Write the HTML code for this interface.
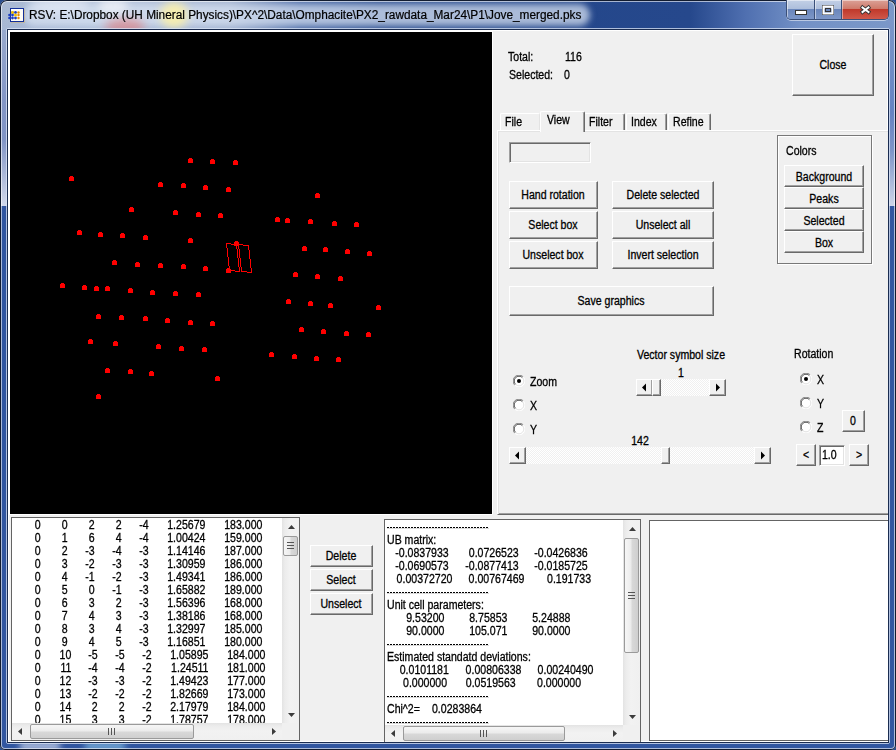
<!DOCTYPE html><html><head><meta charset="utf-8"><style>
html,body{margin:0;padding:0;}
body{width:896px;height:750px;overflow:hidden;position:relative;background:#2b4f8f;font-family:'Liberation Sans',sans-serif;}
.t{position:absolute;white-space:pre;font-family:'Liberation Sans',sans-serif;font-size:12px;line-height:13px;-webkit-text-stroke:0.3px currentColor;}
.z{position:absolute;width:0;height:13px;}
.btn{position:absolute;box-sizing:border-box;background:#f0f0f0;border-style:solid;border-width:1px;border-color:#fff #696969 #696969 #fff;box-shadow:inset -1px -1px 0 #a0a0a0;}
.sunk{position:absolute;box-sizing:border-box;border-style:solid;border-width:1px;border-color:#a0a0a0 #fff #fff #a0a0a0;box-shadow:inset 1px 1px 0 #696969, inset -1px -1px 0 #e3e3e3;}
</style></head><body>
<div style="position:absolute;left:0;top:0;width:896px;height:750px;border-radius:7px 7px 5px 5px;overflow:hidden;background:#3156a0"><div style="position:absolute;left:0;top:0;width:896px;height:30px;background:linear-gradient(90deg,#a9b9d3 0px,#b4c2da 120px,#a3b3cf 230px,#4a6aa6 300px,#2d4f90 380px,#24478b 560px,#26488c 690px,#4f6fb0 745px,#7391c6 800px,#7b98c8 896px)"></div><div style="position:absolute;left:0;top:18px;width:300px;height:12px;background:linear-gradient(180deg,rgba(160,180,215,0),rgba(160,180,215,.35));-webkit-mask-image:linear-gradient(90deg,#000 70%,transparent)"></div><div style="position:absolute;left:24px;top:4px;width:566px;height:22px;border-radius:11px;background:rgba(215,225,242,.75);filter:blur(3px)"></div><div style="position:absolute;left:105px;top:18px;width:40px;height:18px;border-radius:50%;background:rgba(225,110,110,.55);filter:blur(5px)"></div><div style="position:absolute;left:160px;top:2px;width:28px;height:26px;border-radius:50%;background:rgba(250,240,170,.9);filter:blur(4px)"></div><div style="position:absolute;left:98px;top:-2px;width:30px;height:16px;border-radius:50%;background:rgba(245,245,250,.7);filter:blur(4px)"></div><div style="position:absolute;left:30px;top:-4px;width:60px;height:16px;border-radius:50%;background:rgba(235,240,250,.6);filter:blur(5px)"></div><div style="position:absolute;left:0;top:30px;width:8px;height:176px;background:linear-gradient(180deg,#98a9cd 0,#8396c6 40%,#8094c5 62%,#d2d9eb 100%)"></div><div style="position:absolute;left:888px;top:20px;width:8px;height:186px;background:linear-gradient(180deg,#7d97c9 0,#6683c2 50%,#7d95c8 70%,#cdd5e8 100%)"></div><div style="position:absolute;left:20px;top:743px;width:40px;height:6px;background:rgba(235,240,250,.85);filter:blur(3px)"></div><div style="position:absolute;left:85px;top:743px;width:40px;height:6px;background:rgba(150,210,240,.8);filter:blur(3px)"></div></div>
<div style="position:absolute;left:0;top:0;width:896px;height:750px;border-radius:7px 7px 5px 5px;box-shadow:inset 0 0 0 1px #121c30, inset 0 0 0 2px rgba(255,255,255,.6);"></div>
<div style="position:absolute;left:6px;top:28px;width:884px;height:716px;box-sizing:border-box;border:1px solid rgba(220,230,245,.75);border-radius:2px"></div>
<div style="position:absolute;left:8px;top:30px;width:880px;height:712px;background:#f0f0f0"></div>
<div style="position:absolute;left:7px;top:29px;width:882px;height:1px;background:#1a2c50"></div>
<div style="position:absolute;left:7px;top:29px;width:1px;height:713px;background:#1a2c50"></div>
<div style="position:absolute;left:888px;top:29px;width:1px;height:713px;background:#1a2c50"></div>
<div style="position:absolute;left:8px;top:30px;width:880px;height:1px;background:#fff"></div>
<div style="position:absolute;left:8px;top:30px;width:1px;height:712px;background:#fff"></div>
<div style="position:absolute;left:887px;top:30px;width:1px;height:712px;background:#fff"></div>
<div style="position:absolute;left:7px;top:742px;width:882px;height:1px;background:#1a2c50"></div>
<div style="position:absolute;left:8px;top:741px;width:880px;height:1px;background:#fff"></div>
<div style="position:absolute;left:9px;top:31px;width:484px;height:484px;background:#fff"></div>
<div style="position:absolute;left:10px;top:32px;width:482px;height:482px;background:#000"></div>
<svg style="position:absolute;left:0;top:0" width="896" height="750" shape-rendering="crispEdges"><path d="M188 159h5v4h-5zM189 158h3v1h-3z" fill="#f00"/><path d="M210 160h5v4h-5zM211 159h3v1h-3z" fill="#f00"/><path d="M233 161h5v4h-5zM234 160h3v1h-3z" fill="#f00"/><path d="M69 177h5v4h-5zM70 176h3v1h-3z" fill="#f00"/><path d="M158 183h5v4h-5zM159 182h3v1h-3z" fill="#f00"/><path d="M181 184h5v4h-5zM182 183h3v1h-3z" fill="#f00"/><path d="M203 186h5v4h-5zM204 185h3v1h-3z" fill="#f00"/><path d="M226 188h5v4h-5zM227 187h3v1h-3z" fill="#f00"/><path d="M129 208h5v4h-5zM130 207h3v1h-3z" fill="#f00"/><path d="M173 211h5v4h-5zM174 210h3v1h-3z" fill="#f00"/><path d="M196 213h5v4h-5zM197 212h3v1h-3z" fill="#f00"/><path d="M218 214h5v4h-5zM219 213h3v1h-3z" fill="#f00"/><path d="M77 231h5v4h-5zM78 230h3v1h-3z" fill="#f00"/><path d="M98 233h5v4h-5zM99 232h3v1h-3z" fill="#f00"/><path d="M120 234h5v4h-5zM121 233h3v1h-3z" fill="#f00"/><path d="M143 236h5v4h-5zM144 235h3v1h-3z" fill="#f00"/><path d="M188 239h5v4h-5zM189 238h3v1h-3z" fill="#f00"/><path d="M112 261h5v4h-5zM113 260h3v1h-3z" fill="#f00"/><path d="M135 263h5v4h-5zM136 262h3v1h-3z" fill="#f00"/><path d="M158 264h5v4h-5zM159 263h3v1h-3z" fill="#f00"/><path d="M181 265h5v4h-5zM182 264h3v1h-3z" fill="#f00"/><path d="M203 267h5v4h-5zM204 266h3v1h-3z" fill="#f00"/><path d="M60 284h5v4h-5zM61 283h3v1h-3z" fill="#f00"/><path d="M82 286h5v4h-5zM83 285h3v1h-3z" fill="#f00"/><path d="M94 287h5v4h-5zM95 286h3v1h-3z" fill="#f00"/><path d="M105 287h5v4h-5zM106 286h3v1h-3z" fill="#f00"/><path d="M128 289h5v4h-5zM129 288h3v1h-3z" fill="#f00"/><path d="M150 291h5v4h-5zM151 290h3v1h-3z" fill="#f00"/><path d="M173 292h5v4h-5zM174 291h3v1h-3z" fill="#f00"/><path d="M196 293h5v4h-5zM197 292h3v1h-3z" fill="#f00"/><path d="M96 315h5v4h-5zM97 314h3v1h-3z" fill="#f00"/><path d="M119 316h5v4h-5zM120 315h3v1h-3z" fill="#f00"/><path d="M143 317h5v4h-5zM144 316h3v1h-3z" fill="#f00"/><path d="M165 319h5v4h-5zM166 318h3v1h-3z" fill="#f00"/><path d="M188 321h5v4h-5zM189 320h3v1h-3z" fill="#f00"/><path d="M210 322h5v4h-5zM211 321h3v1h-3z" fill="#f00"/><path d="M88 340h5v4h-5zM89 339h3v1h-3z" fill="#f00"/><path d="M113 342h5v4h-5zM114 341h3v1h-3z" fill="#f00"/><path d="M156 345h5v4h-5zM157 344h3v1h-3z" fill="#f00"/><path d="M179 347h5v4h-5zM180 346h3v1h-3z" fill="#f00"/><path d="M202 348h5v4h-5zM203 347h3v1h-3z" fill="#f00"/><path d="M105 369h5v4h-5zM106 368h3v1h-3z" fill="#f00"/><path d="M128 370h5v4h-5zM129 369h3v1h-3z" fill="#f00"/><path d="M149 372h5v4h-5zM150 371h3v1h-3z" fill="#f00"/><path d="M215 377h5v4h-5zM216 376h3v1h-3z" fill="#f00"/><path d="M96 395h5v4h-5zM97 394h3v1h-3z" fill="#f00"/><path d="M315 194h5v4h-5zM316 193h3v1h-3z" fill="#f00"/><path d="M275 218h5v4h-5zM276 217h3v1h-3z" fill="#f00"/><path d="M285 219h5v4h-5zM286 218h3v1h-3z" fill="#f00"/><path d="M308 220h5v4h-5zM309 219h3v1h-3z" fill="#f00"/><path d="M332 222h5v4h-5zM333 221h3v1h-3z" fill="#f00"/><path d="M354 223h5v4h-5zM355 222h3v1h-3z" fill="#f00"/><path d="M302 247h5v4h-5zM303 246h3v1h-3z" fill="#f00"/><path d="M323 248h5v4h-5zM324 247h3v1h-3z" fill="#f00"/><path d="M345 250h5v4h-5zM346 249h3v1h-3z" fill="#f00"/><path d="M367 252h5v4h-5zM368 251h3v1h-3z" fill="#f00"/><path d="M293 273h5v4h-5zM294 272h3v1h-3z" fill="#f00"/><path d="M315 275h5v4h-5zM316 274h3v1h-3z" fill="#f00"/><path d="M338 277h5v4h-5zM339 276h3v1h-3z" fill="#f00"/><path d="M286 300h5v4h-5zM287 299h3v1h-3z" fill="#f00"/><path d="M308 302h5v4h-5zM309 301h3v1h-3z" fill="#f00"/><path d="M328 304h5v4h-5zM329 303h3v1h-3z" fill="#f00"/><path d="M376 306h5v4h-5zM377 305h3v1h-3z" fill="#f00"/><path d="M299 328h5v4h-5zM300 327h3v1h-3z" fill="#f00"/><path d="M321 330h5v4h-5zM322 329h3v1h-3z" fill="#f00"/><path d="M344 332h5v4h-5zM345 331h3v1h-3z" fill="#f00"/><path d="M366 333h5v4h-5zM367 332h3v1h-3z" fill="#f00"/><path d="M269 353h5v4h-5zM270 352h3v1h-3z" fill="#f00"/><path d="M292 355h5v4h-5zM293 354h3v1h-3z" fill="#f00"/><path d="M314 357h5v4h-5zM315 356h3v1h-3z" fill="#f00"/><path d="M336 358h5v4h-5zM337 357h3v1h-3z" fill="#f00"/><path d="M234 242h5v4h-5zM235 241h3v1h-3z" fill="#f00"/><path d="M226 269h5v4h-5zM227 268h3v1h-3z" fill="#f00"/><path d="M226 243h1v1h-1zM226 244h1v1h-1zM226 245h1v1h-1zM226 246h1v1h-1zM226 247h1v1h-1zM227 243h1v1h-1zM227 248h1v1h-1zM227 249h1v1h-1zM227 250h1v1h-1zM227 251h1v1h-1zM227 252h1v1h-1zM227 253h1v1h-1zM227 254h1v1h-1zM227 255h1v1h-1zM227 256h1v1h-1zM228 243h1v1h-1zM228 257h1v1h-1zM228 258h1v1h-1zM228 259h1v1h-1zM228 260h1v1h-1zM228 261h1v1h-1zM228 262h1v1h-1zM228 263h1v1h-1zM228 264h1v1h-1zM228 265h1v1h-1zM229 243h1v1h-1zM229 266h1v1h-1zM229 267h1v1h-1zM229 268h1v1h-1zM229 269h1v1h-1zM229 270h1v1h-1zM230 243h1v1h-1zM230 270h1v1h-1zM231 244h1v1h-1zM231 270h1v1h-1zM232 244h1v1h-1zM232 270h1v1h-1zM233 244h1v1h-1zM233 270h1v1h-1zM234 244h1v1h-1zM234 270h1v1h-1zM235 244h1v1h-1zM235 271h1v1h-1zM236 244h1v1h-1zM236 245h1v1h-1zM236 246h1v1h-1zM236 247h1v1h-1zM236 248h1v1h-1zM236 271h1v1h-1zM237 249h1v1h-1zM237 250h1v1h-1zM237 251h1v1h-1zM237 252h1v1h-1zM237 253h1v1h-1zM237 254h1v1h-1zM237 255h1v1h-1zM237 256h1v1h-1zM237 257h1v1h-1zM237 271h1v1h-1zM238 244h1v1h-1zM238 245h1v1h-1zM238 246h1v1h-1zM238 247h1v1h-1zM238 248h1v1h-1zM238 258h1v1h-1zM238 259h1v1h-1zM238 260h1v1h-1zM238 261h1v1h-1zM238 262h1v1h-1zM238 263h1v1h-1zM238 264h1v1h-1zM238 265h1v1h-1zM238 266h1v1h-1zM238 271h1v1h-1zM239 244h1v1h-1zM239 249h1v1h-1zM239 250h1v1h-1zM239 251h1v1h-1zM239 252h1v1h-1zM239 253h1v1h-1zM239 254h1v1h-1zM239 255h1v1h-1zM239 256h1v1h-1zM239 257h1v1h-1zM239 267h1v1h-1zM239 268h1v1h-1zM239 269h1v1h-1zM239 270h1v1h-1zM239 271h1v1h-1zM240 244h1v1h-1zM240 258h1v1h-1zM240 259h1v1h-1zM240 260h1v1h-1zM240 261h1v1h-1zM240 262h1v1h-1zM240 263h1v1h-1zM240 264h1v1h-1zM240 265h1v1h-1zM240 266h1v1h-1zM241 244h1v1h-1zM241 267h1v1h-1zM241 268h1v1h-1zM241 269h1v1h-1zM241 270h1v1h-1zM241 271h1v1h-1zM242 244h1v1h-1zM242 271h1v1h-1zM243 245h1v1h-1zM243 271h1v1h-1zM244 245h1v1h-1zM244 271h1v1h-1zM245 245h1v1h-1zM245 271h1v1h-1zM246 245h1v1h-1zM246 271h1v1h-1zM247 245h1v1h-1zM247 272h1v1h-1zM248 245h1v1h-1zM248 246h1v1h-1zM248 247h1v1h-1zM248 248h1v1h-1zM248 249h1v1h-1zM248 272h1v1h-1zM249 250h1v1h-1zM249 251h1v1h-1zM249 252h1v1h-1zM249 253h1v1h-1zM249 254h1v1h-1zM249 255h1v1h-1zM249 256h1v1h-1zM249 257h1v1h-1zM249 258h1v1h-1zM249 272h1v1h-1zM250 259h1v1h-1zM250 260h1v1h-1zM250 261h1v1h-1zM250 262h1v1h-1zM250 263h1v1h-1zM250 264h1v1h-1zM250 265h1v1h-1zM250 266h1v1h-1zM250 267h1v1h-1zM250 272h1v1h-1zM251 268h1v1h-1zM251 269h1v1h-1zM251 270h1v1h-1zM251 271h1v1h-1zM251 272h1v1h-1z" fill="#f00"/></svg>
<div class="t" style="left:508px;top:51px;transform:scaleX(0.88);transform-origin:0 0;font-size:12px;color:#000;">Total:</div>
<div class="t" style="left:565px;top:51px;transform:scaleX(0.88);transform-origin:0 0;font-size:12px;color:#000;">116</div>
<div class="t" style="left:509px;top:69px;transform:scaleX(0.88);transform-origin:0 0;font-size:12px;color:#000;">Selected:</div>
<div class="t" style="left:564px;top:69px;transform:scaleX(0.88);transform-origin:0 0;font-size:12px;color:#000;">0</div>
<div class="btn" style="left:792px;top:34px;width:82px;height:62px"></div>
<div class="z" style="left:832.7px;top:59px"><span class="t" style="left:0;transform:translateX(-50%) scaleX(0.88);transform-origin:50% 0;font-size:12px;color:#000;">Close</span></div>
<div style="position:absolute;left:497px;top:130px;width:391px;height:385px;background:#f0f0f0;border-top:1px solid #fff;border-left:1px solid #fff;border-bottom:1px solid #696969;box-sizing:border-box;box-shadow:inset 1px 1px 0 #e3e3e3, inset 0 -1px 0 #a0a0a0"></div>
<div style="position:absolute;left:500px;top:113px;width:40px;height:17px;background:#f0f0f0;box-sizing:border-box;border-left:1px solid #fff;border-top:1px solid #fff;border-right:1px solid #e3e3e3;border-radius:2px 2px 0 0"></div>
<div style="position:absolute;left:584px;top:113px;width:41px;height:17px;background:#f0f0f0;box-sizing:border-box;border-left:1px solid #fff;border-top:1px solid #fff;border-right:1px solid #696969;border-radius:2px 2px 0 0;box-shadow:inset -1px 0 0 #a0a0a0"></div>
<div style="position:absolute;left:626px;top:113px;width:41px;height:17px;background:#f0f0f0;box-sizing:border-box;border-left:1px solid #fff;border-top:1px solid #fff;border-right:1px solid #696969;border-radius:2px 2px 0 0;box-shadow:inset -1px 0 0 #a0a0a0"></div>
<div style="position:absolute;left:668px;top:113px;width:43px;height:17px;background:#f0f0f0;box-sizing:border-box;border-left:1px solid #fff;border-top:1px solid #fff;border-right:1px solid #696969;border-radius:2px 2px 0 0;box-shadow:inset -1px 0 0 #a0a0a0"></div>
<div style="position:absolute;left:540px;top:111px;width:45px;height:21px;background:#f0f0f0;box-sizing:border-box;border-left:1px solid #fff;border-top:1px solid #fff;border-right:1px solid #696969;border-radius:2px 2px 0 0;box-shadow:inset -1px 0 0 #a0a0a0"></div>
<div class="t" style="left:505px;top:116px;transform:scaleX(0.88);transform-origin:0 0;font-size:12px;color:#000;">File</div>
<div class="t" style="left:547px;top:114px;transform:scaleX(0.88);transform-origin:0 0;font-size:12px;color:#000;">View</div>
<div class="t" style="left:589px;top:116px;transform:scaleX(0.88);transform-origin:0 0;font-size:12px;color:#000;">Filter</div>
<div class="t" style="left:631px;top:116px;transform:scaleX(0.88);transform-origin:0 0;font-size:12px;color:#000;">Index</div>
<div class="t" style="left:673px;top:116px;transform:scaleX(0.88);transform-origin:0 0;font-size:12px;color:#000;">Refine</div>
<div class="sunk" style="left:509px;top:142px;width:82px;height:21px;background:#f0f0f0"></div>
<div class="btn" style="left:509px;top:181px;width:89px;height:28px"></div>
<div class="z" style="left:553.2px;top:189px"><span class="t" style="left:0;transform:translateX(-50%) scaleX(0.88);transform-origin:50% 0;font-size:12px;color:#000;">Hand rotation</span></div>
<div class="btn" style="left:509px;top:211px;width:89px;height:28px"></div>
<div class="z" style="left:553.2px;top:219px"><span class="t" style="left:0;transform:translateX(-50%) scaleX(0.88);transform-origin:50% 0;font-size:12px;color:#000;">Select box</span></div>
<div class="btn" style="left:509px;top:241px;width:89px;height:28px"></div>
<div class="z" style="left:553.2px;top:249px"><span class="t" style="left:0;transform:translateX(-50%) scaleX(0.88);transform-origin:50% 0;font-size:12px;color:#000;">Unselect box</span></div>
<div class="btn" style="left:612px;top:181px;width:102px;height:28px"></div>
<div class="z" style="left:662.7px;top:189px"><span class="t" style="left:0;transform:translateX(-50%) scaleX(0.88);transform-origin:50% 0;font-size:12px;color:#000;">Delete selected</span></div>
<div class="btn" style="left:612px;top:211px;width:102px;height:28px"></div>
<div class="z" style="left:662.7px;top:219px"><span class="t" style="left:0;transform:translateX(-50%) scaleX(0.88);transform-origin:50% 0;font-size:12px;color:#000;">Unselect all</span></div>
<div class="btn" style="left:612px;top:241px;width:102px;height:28px"></div>
<div class="z" style="left:662.7px;top:249px"><span class="t" style="left:0;transform:translateX(-50%) scaleX(0.88);transform-origin:50% 0;font-size:12px;color:#000;">Invert selection</span></div>
<div class="btn" style="left:509px;top:286px;width:205px;height:30px"></div>
<div class="z" style="left:611.2px;top:295px"><span class="t" style="left:0;transform:translateX(-50%) scaleX(0.88);transform-origin:50% 0;font-size:12px;color:#000;">Save graphics</span></div>
<div style="position:absolute;left:777px;top:135px;width:95px;height:129px;box-sizing:border-box;border:1px solid #787878;box-shadow:1px 1px 0 #fff, inset 1px 1px 0 #fff"></div>
<div class="t" style="left:786px;top:145px;transform:scaleX(0.88);transform-origin:0 0;font-size:12px;color:#000;">Colors</div>
<div class="btn" style="left:784px;top:165px;width:80px;height:22px"></div>
<div class="z" style="left:823.7px;top:171px"><span class="t" style="left:0;transform:translateX(-50%) scaleX(0.88);transform-origin:50% 0;font-size:12px;color:#000;">Background</span></div>
<div class="btn" style="left:784px;top:187px;width:80px;height:22px"></div>
<div class="z" style="left:823.7px;top:193px"><span class="t" style="left:0;transform:translateX(-50%) scaleX(0.88);transform-origin:50% 0;font-size:12px;color:#000;">Peaks</span></div>
<div class="btn" style="left:784px;top:209px;width:80px;height:22px"></div>
<div class="z" style="left:823.7px;top:215px"><span class="t" style="left:0;transform:translateX(-50%) scaleX(0.88);transform-origin:50% 0;font-size:12px;color:#000;">Selected</span></div>
<div class="btn" style="left:784px;top:231px;width:80px;height:22px"></div>
<div class="z" style="left:823.7px;top:237px"><span class="t" style="left:0;transform:translateX(-50%) scaleX(0.88);transform-origin:50% 0;font-size:12px;color:#000;">Box</span></div>
<div class="z" style="left:680.7px;top:349px"><span class="t" style="left:0;transform:translateX(-50%) scaleX(0.88);transform-origin:50% 0;font-size:12px;color:#000;">Vector symbol size</span></div>
<div class="z" style="left:680.7px;top:367px"><span class="t" style="left:0;transform:translateX(-50%) scaleX(0.88);transform-origin:50% 0;font-size:12px;color:#000;">1</span></div>
<div style="position:absolute;left:636px;top:379px;width:90px;height:17px;background-color:#fff;background-image:repeating-conic-gradient(#f0f0f0 0 25%, #fff 0 50%);background-size:2px 2px"></div>
<div class="btn" style="left:636px;top:379px;width:17px;height:17px"></div>
<div class="btn" style="left:709px;top:379px;width:17px;height:17px"></div>
<div class="btn" style="left:652px;top:379px;width:9px;height:17px"></div>
<svg style="position:absolute;left:636px;top:379px" width="17" height="17"><path d="M6 8.5 L10 4.5 L10 12.5 Z" fill="#000"/></svg>
<svg style="position:absolute;left:709px;top:379px" width="17" height="17"><path d="M11 8.5 L7 4.5 L7 12.5 Z" fill="#000"/></svg>
<svg style="position:absolute;left:513px;top:375px" width="12" height="12" viewBox="0 0 12 12"><circle cx="6" cy="6" r="5.5" fill="#fff"/><path d="M10.2 1.8 A5.5 5.5 0 0 0 1.8 10.2" stroke="#808080" stroke-width="1" fill="none"/><path d="M9.4 2.6 A4.5 4.5 0 0 0 2.6 9.4" stroke="#505050" stroke-width="1" fill="none"/><path d="M1.8 10.2 A5.5 5.5 0 0 0 10.2 1.8" stroke="#fff" stroke-width="1" fill="none"/><path d="M2.6 9.4 A4.5 4.5 0 0 0 9.4 2.6" stroke="#e3e3e3" stroke-width="1" fill="none"/><circle cx="6" cy="6" r="2" fill="#000"/></svg>
<div class="t" style="left:530px;top:376px;transform:scaleX(0.88);transform-origin:0 0;font-size:12px;color:#000;">Zoom</div>
<svg style="position:absolute;left:513px;top:399px" width="12" height="12" viewBox="0 0 12 12"><circle cx="6" cy="6" r="5.5" fill="#fff"/><path d="M10.2 1.8 A5.5 5.5 0 0 0 1.8 10.2" stroke="#808080" stroke-width="1" fill="none"/><path d="M9.4 2.6 A4.5 4.5 0 0 0 2.6 9.4" stroke="#505050" stroke-width="1" fill="none"/><path d="M1.8 10.2 A5.5 5.5 0 0 0 10.2 1.8" stroke="#fff" stroke-width="1" fill="none"/><path d="M2.6 9.4 A4.5 4.5 0 0 0 9.4 2.6" stroke="#e3e3e3" stroke-width="1" fill="none"/></svg>
<div class="t" style="left:530px;top:400px;transform:scaleX(0.88);transform-origin:0 0;font-size:12px;color:#000;">X</div>
<svg style="position:absolute;left:513px;top:423px" width="12" height="12" viewBox="0 0 12 12"><circle cx="6" cy="6" r="5.5" fill="#fff"/><path d="M10.2 1.8 A5.5 5.5 0 0 0 1.8 10.2" stroke="#808080" stroke-width="1" fill="none"/><path d="M9.4 2.6 A4.5 4.5 0 0 0 2.6 9.4" stroke="#505050" stroke-width="1" fill="none"/><path d="M1.8 10.2 A5.5 5.5 0 0 0 10.2 1.8" stroke="#fff" stroke-width="1" fill="none"/><path d="M2.6 9.4 A4.5 4.5 0 0 0 9.4 2.6" stroke="#e3e3e3" stroke-width="1" fill="none"/></svg>
<div class="t" style="left:530px;top:424px;transform:scaleX(0.88);transform-origin:0 0;font-size:12px;color:#000;">Y</div>
<div class="z" style="left:639.7px;top:435px"><span class="t" style="left:0;transform:translateX(-50%) scaleX(0.88);transform-origin:50% 0;font-size:12px;color:#000;">142</span></div>
<div style="position:absolute;left:509px;top:447px;width:262px;height:17px;background-color:#fff;background-image:repeating-conic-gradient(#f0f0f0 0 25%, #fff 0 50%);background-size:2px 2px"></div>
<div class="btn" style="left:509px;top:447px;width:17px;height:17px"></div>
<div class="btn" style="left:754px;top:447px;width:17px;height:17px"></div>
<div class="btn" style="left:661px;top:447px;width:9px;height:17px"></div>
<svg style="position:absolute;left:509px;top:447px" width="17" height="17"><path d="M6 8.5 L10 4.5 L10 12.5 Z" fill="#000"/></svg>
<svg style="position:absolute;left:754px;top:447px" width="17" height="17"><path d="M11 8.5 L7 4.5 L7 12.5 Z" fill="#000"/></svg>
<div class="t" style="left:794px;top:348px;transform:scaleX(0.88);transform-origin:0 0;font-size:12px;color:#000;">Rotation</div>
<svg style="position:absolute;left:800px;top:373px" width="12" height="12" viewBox="0 0 12 12"><circle cx="6" cy="6" r="5.5" fill="#fff"/><path d="M10.2 1.8 A5.5 5.5 0 0 0 1.8 10.2" stroke="#808080" stroke-width="1" fill="none"/><path d="M9.4 2.6 A4.5 4.5 0 0 0 2.6 9.4" stroke="#505050" stroke-width="1" fill="none"/><path d="M1.8 10.2 A5.5 5.5 0 0 0 10.2 1.8" stroke="#fff" stroke-width="1" fill="none"/><path d="M2.6 9.4 A4.5 4.5 0 0 0 9.4 2.6" stroke="#e3e3e3" stroke-width="1" fill="none"/><circle cx="6" cy="6" r="2" fill="#000"/></svg>
<div class="t" style="left:817px;top:374px;transform:scaleX(0.88);transform-origin:0 0;font-size:12px;color:#000;">X</div>
<svg style="position:absolute;left:800px;top:397px" width="12" height="12" viewBox="0 0 12 12"><circle cx="6" cy="6" r="5.5" fill="#fff"/><path d="M10.2 1.8 A5.5 5.5 0 0 0 1.8 10.2" stroke="#808080" stroke-width="1" fill="none"/><path d="M9.4 2.6 A4.5 4.5 0 0 0 2.6 9.4" stroke="#505050" stroke-width="1" fill="none"/><path d="M1.8 10.2 A5.5 5.5 0 0 0 10.2 1.8" stroke="#fff" stroke-width="1" fill="none"/><path d="M2.6 9.4 A4.5 4.5 0 0 0 9.4 2.6" stroke="#e3e3e3" stroke-width="1" fill="none"/></svg>
<div class="t" style="left:817px;top:398px;transform:scaleX(0.88);transform-origin:0 0;font-size:12px;color:#000;">Y</div>
<svg style="position:absolute;left:800px;top:421px" width="12" height="12" viewBox="0 0 12 12"><circle cx="6" cy="6" r="5.5" fill="#fff"/><path d="M10.2 1.8 A5.5 5.5 0 0 0 1.8 10.2" stroke="#808080" stroke-width="1" fill="none"/><path d="M9.4 2.6 A4.5 4.5 0 0 0 2.6 9.4" stroke="#505050" stroke-width="1" fill="none"/><path d="M1.8 10.2 A5.5 5.5 0 0 0 10.2 1.8" stroke="#fff" stroke-width="1" fill="none"/><path d="M2.6 9.4 A4.5 4.5 0 0 0 9.4 2.6" stroke="#e3e3e3" stroke-width="1" fill="none"/></svg>
<div class="t" style="left:817px;top:422px;transform:scaleX(0.88);transform-origin:0 0;font-size:12px;color:#000;">Z</div>
<div class="btn" style="left:842px;top:410px;width:23px;height:22px"></div>
<div class="z" style="left:853.2px;top:415px"><span class="t" style="left:0;transform:translateX(-50%) scaleX(0.88);transform-origin:50% 0;font-size:12px;color:#000;">0</span></div>
<div class="btn" style="left:796px;top:444px;width:20px;height:22px"></div>
<div class="z" style="left:805.7px;top:449px"><span class="t" style="left:0;transform:translateX(-50%) scaleX(0.88);transform-origin:50% 0;font-size:12px;color:#000;">&lt;</span></div>
<div class="sunk" style="left:819px;top:445px;width:26px;height:21px;background:#fff"></div>
<div class="t" style="left:822px;top:449px;transform:scaleX(0.88);transform-origin:0 0;font-size:12px;color:#000;">1.0</div>
<div class="btn" style="left:849px;top:444px;width:20px;height:22px"></div>
<div class="z" style="left:858.7px;top:449px"><span class="t" style="left:0;transform:translateX(-50%) scaleX(0.88);transform-origin:50% 0;font-size:12px;color:#000;">&gt;</span></div>
<div style="position:absolute;left:11px;top:517px;width:289px;height:224px;background:#fff;border:1px solid #646464;box-sizing:border-box"></div>
<div style="position:absolute;left:12px;top:518px;width:270px;height:205px;overflow:hidden">
<div class="z" style="left:29px;top:1px"><span class="t" style="right:0;transform:scaleX(0.88);transform-origin:100% 0">0</span></div>
<div class="z" style="left:56px;top:1px"><span class="t" style="right:0;transform:scaleX(0.88);transform-origin:100% 0">0</span></div>
<div class="z" style="left:83px;top:1px"><span class="t" style="right:0;transform:scaleX(0.88);transform-origin:100% 0">2</span></div>
<div class="z" style="left:110px;top:1px"><span class="t" style="right:0;transform:scaleX(0.88);transform-origin:100% 0">2</span></div>
<div class="z" style="left:137px;top:1px"><span class="t" style="right:0;transform:scaleX(0.88);transform-origin:100% 0">-4</span></div>
<div class="z" style="left:193px;top:1px"><span class="t" style="right:0;transform:scaleX(0.88);transform-origin:100% 0">1.25679</span></div>
<div class="z" style="left:250px;top:1px"><span class="t" style="right:0;transform:scaleX(0.88);transform-origin:100% 0">183.000</span></div>
<div class="z" style="left:29px;top:14px"><span class="t" style="right:0;transform:scaleX(0.88);transform-origin:100% 0">0</span></div>
<div class="z" style="left:56px;top:14px"><span class="t" style="right:0;transform:scaleX(0.88);transform-origin:100% 0">1</span></div>
<div class="z" style="left:83px;top:14px"><span class="t" style="right:0;transform:scaleX(0.88);transform-origin:100% 0">6</span></div>
<div class="z" style="left:110px;top:14px"><span class="t" style="right:0;transform:scaleX(0.88);transform-origin:100% 0">4</span></div>
<div class="z" style="left:137px;top:14px"><span class="t" style="right:0;transform:scaleX(0.88);transform-origin:100% 0">-4</span></div>
<div class="z" style="left:193px;top:14px"><span class="t" style="right:0;transform:scaleX(0.88);transform-origin:100% 0">1.00424</span></div>
<div class="z" style="left:250px;top:14px"><span class="t" style="right:0;transform:scaleX(0.88);transform-origin:100% 0">159.000</span></div>
<div class="z" style="left:29px;top:27px"><span class="t" style="right:0;transform:scaleX(0.88);transform-origin:100% 0">0</span></div>
<div class="z" style="left:56px;top:27px"><span class="t" style="right:0;transform:scaleX(0.88);transform-origin:100% 0">2</span></div>
<div class="z" style="left:83px;top:27px"><span class="t" style="right:0;transform:scaleX(0.88);transform-origin:100% 0">-3</span></div>
<div class="z" style="left:110px;top:27px"><span class="t" style="right:0;transform:scaleX(0.88);transform-origin:100% 0">-4</span></div>
<div class="z" style="left:137px;top:27px"><span class="t" style="right:0;transform:scaleX(0.88);transform-origin:100% 0">-3</span></div>
<div class="z" style="left:193px;top:27px"><span class="t" style="right:0;transform:scaleX(0.88);transform-origin:100% 0">1.14146</span></div>
<div class="z" style="left:250px;top:27px"><span class="t" style="right:0;transform:scaleX(0.88);transform-origin:100% 0">187.000</span></div>
<div class="z" style="left:29px;top:40px"><span class="t" style="right:0;transform:scaleX(0.88);transform-origin:100% 0">0</span></div>
<div class="z" style="left:56px;top:40px"><span class="t" style="right:0;transform:scaleX(0.88);transform-origin:100% 0">3</span></div>
<div class="z" style="left:83px;top:40px"><span class="t" style="right:0;transform:scaleX(0.88);transform-origin:100% 0">-2</span></div>
<div class="z" style="left:110px;top:40px"><span class="t" style="right:0;transform:scaleX(0.88);transform-origin:100% 0">-3</span></div>
<div class="z" style="left:137px;top:40px"><span class="t" style="right:0;transform:scaleX(0.88);transform-origin:100% 0">-3</span></div>
<div class="z" style="left:193px;top:40px"><span class="t" style="right:0;transform:scaleX(0.88);transform-origin:100% 0">1.30959</span></div>
<div class="z" style="left:250px;top:40px"><span class="t" style="right:0;transform:scaleX(0.88);transform-origin:100% 0">186.000</span></div>
<div class="z" style="left:29px;top:53px"><span class="t" style="right:0;transform:scaleX(0.88);transform-origin:100% 0">0</span></div>
<div class="z" style="left:56px;top:53px"><span class="t" style="right:0;transform:scaleX(0.88);transform-origin:100% 0">4</span></div>
<div class="z" style="left:83px;top:53px"><span class="t" style="right:0;transform:scaleX(0.88);transform-origin:100% 0">-1</span></div>
<div class="z" style="left:110px;top:53px"><span class="t" style="right:0;transform:scaleX(0.88);transform-origin:100% 0">-2</span></div>
<div class="z" style="left:137px;top:53px"><span class="t" style="right:0;transform:scaleX(0.88);transform-origin:100% 0">-3</span></div>
<div class="z" style="left:193px;top:53px"><span class="t" style="right:0;transform:scaleX(0.88);transform-origin:100% 0">1.49341</span></div>
<div class="z" style="left:250px;top:53px"><span class="t" style="right:0;transform:scaleX(0.88);transform-origin:100% 0">186.000</span></div>
<div class="z" style="left:29px;top:66px"><span class="t" style="right:0;transform:scaleX(0.88);transform-origin:100% 0">0</span></div>
<div class="z" style="left:56px;top:66px"><span class="t" style="right:0;transform:scaleX(0.88);transform-origin:100% 0">5</span></div>
<div class="z" style="left:83px;top:66px"><span class="t" style="right:0;transform:scaleX(0.88);transform-origin:100% 0">0</span></div>
<div class="z" style="left:110px;top:66px"><span class="t" style="right:0;transform:scaleX(0.88);transform-origin:100% 0">-1</span></div>
<div class="z" style="left:137px;top:66px"><span class="t" style="right:0;transform:scaleX(0.88);transform-origin:100% 0">-3</span></div>
<div class="z" style="left:193px;top:66px"><span class="t" style="right:0;transform:scaleX(0.88);transform-origin:100% 0">1.65882</span></div>
<div class="z" style="left:250px;top:66px"><span class="t" style="right:0;transform:scaleX(0.88);transform-origin:100% 0">189.000</span></div>
<div class="z" style="left:29px;top:79px"><span class="t" style="right:0;transform:scaleX(0.88);transform-origin:100% 0">0</span></div>
<div class="z" style="left:56px;top:79px"><span class="t" style="right:0;transform:scaleX(0.88);transform-origin:100% 0">6</span></div>
<div class="z" style="left:83px;top:79px"><span class="t" style="right:0;transform:scaleX(0.88);transform-origin:100% 0">3</span></div>
<div class="z" style="left:110px;top:79px"><span class="t" style="right:0;transform:scaleX(0.88);transform-origin:100% 0">2</span></div>
<div class="z" style="left:137px;top:79px"><span class="t" style="right:0;transform:scaleX(0.88);transform-origin:100% 0">-3</span></div>
<div class="z" style="left:193px;top:79px"><span class="t" style="right:0;transform:scaleX(0.88);transform-origin:100% 0">1.56396</span></div>
<div class="z" style="left:250px;top:79px"><span class="t" style="right:0;transform:scaleX(0.88);transform-origin:100% 0">168.000</span></div>
<div class="z" style="left:29px;top:92px"><span class="t" style="right:0;transform:scaleX(0.88);transform-origin:100% 0">0</span></div>
<div class="z" style="left:56px;top:92px"><span class="t" style="right:0;transform:scaleX(0.88);transform-origin:100% 0">7</span></div>
<div class="z" style="left:83px;top:92px"><span class="t" style="right:0;transform:scaleX(0.88);transform-origin:100% 0">4</span></div>
<div class="z" style="left:110px;top:92px"><span class="t" style="right:0;transform:scaleX(0.88);transform-origin:100% 0">3</span></div>
<div class="z" style="left:137px;top:92px"><span class="t" style="right:0;transform:scaleX(0.88);transform-origin:100% 0">-3</span></div>
<div class="z" style="left:193px;top:92px"><span class="t" style="right:0;transform:scaleX(0.88);transform-origin:100% 0">1.38186</span></div>
<div class="z" style="left:250px;top:92px"><span class="t" style="right:0;transform:scaleX(0.88);transform-origin:100% 0">168.000</span></div>
<div class="z" style="left:29px;top:105px"><span class="t" style="right:0;transform:scaleX(0.88);transform-origin:100% 0">0</span></div>
<div class="z" style="left:56px;top:105px"><span class="t" style="right:0;transform:scaleX(0.88);transform-origin:100% 0">8</span></div>
<div class="z" style="left:83px;top:105px"><span class="t" style="right:0;transform:scaleX(0.88);transform-origin:100% 0">3</span></div>
<div class="z" style="left:110px;top:105px"><span class="t" style="right:0;transform:scaleX(0.88);transform-origin:100% 0">4</span></div>
<div class="z" style="left:137px;top:105px"><span class="t" style="right:0;transform:scaleX(0.88);transform-origin:100% 0">-3</span></div>
<div class="z" style="left:193px;top:105px"><span class="t" style="right:0;transform:scaleX(0.88);transform-origin:100% 0">1.32997</span></div>
<div class="z" style="left:250px;top:105px"><span class="t" style="right:0;transform:scaleX(0.88);transform-origin:100% 0">185.000</span></div>
<div class="z" style="left:29px;top:118px"><span class="t" style="right:0;transform:scaleX(0.88);transform-origin:100% 0">0</span></div>
<div class="z" style="left:56px;top:118px"><span class="t" style="right:0;transform:scaleX(0.88);transform-origin:100% 0">9</span></div>
<div class="z" style="left:83px;top:118px"><span class="t" style="right:0;transform:scaleX(0.88);transform-origin:100% 0">4</span></div>
<div class="z" style="left:110px;top:118px"><span class="t" style="right:0;transform:scaleX(0.88);transform-origin:100% 0">5</span></div>
<div class="z" style="left:137px;top:118px"><span class="t" style="right:0;transform:scaleX(0.88);transform-origin:100% 0">-3</span></div>
<div class="z" style="left:193px;top:118px"><span class="t" style="right:0;transform:scaleX(0.88);transform-origin:100% 0">1.16851</span></div>
<div class="z" style="left:250px;top:118px"><span class="t" style="right:0;transform:scaleX(0.88);transform-origin:100% 0">180.000</span></div>
<div class="z" style="left:29px;top:131px"><span class="t" style="right:0;transform:scaleX(0.88);transform-origin:100% 0">0</span></div>
<div class="z" style="left:59px;top:131px"><span class="t" style="right:0;transform:scaleX(0.88);transform-origin:100% 0">10</span></div>
<div class="z" style="left:86px;top:131px"><span class="t" style="right:0;transform:scaleX(0.88);transform-origin:100% 0">-5</span></div>
<div class="z" style="left:113px;top:131px"><span class="t" style="right:0;transform:scaleX(0.88);transform-origin:100% 0">-5</span></div>
<div class="z" style="left:140px;top:131px"><span class="t" style="right:0;transform:scaleX(0.88);transform-origin:100% 0">-2</span></div>
<div class="z" style="left:196px;top:131px"><span class="t" style="right:0;transform:scaleX(0.88);transform-origin:100% 0">1.05895</span></div>
<div class="z" style="left:253px;top:131px"><span class="t" style="right:0;transform:scaleX(0.88);transform-origin:100% 0">184.000</span></div>
<div class="z" style="left:29px;top:144px"><span class="t" style="right:0;transform:scaleX(0.88);transform-origin:100% 0">0</span></div>
<div class="z" style="left:59px;top:144px"><span class="t" style="right:0;transform:scaleX(0.88);transform-origin:100% 0">11</span></div>
<div class="z" style="left:86px;top:144px"><span class="t" style="right:0;transform:scaleX(0.88);transform-origin:100% 0">-4</span></div>
<div class="z" style="left:113px;top:144px"><span class="t" style="right:0;transform:scaleX(0.88);transform-origin:100% 0">-4</span></div>
<div class="z" style="left:140px;top:144px"><span class="t" style="right:0;transform:scaleX(0.88);transform-origin:100% 0">-2</span></div>
<div class="z" style="left:196px;top:144px"><span class="t" style="right:0;transform:scaleX(0.88);transform-origin:100% 0">1.24511</span></div>
<div class="z" style="left:253px;top:144px"><span class="t" style="right:0;transform:scaleX(0.88);transform-origin:100% 0">181.000</span></div>
<div class="z" style="left:29px;top:157px"><span class="t" style="right:0;transform:scaleX(0.88);transform-origin:100% 0">0</span></div>
<div class="z" style="left:59px;top:157px"><span class="t" style="right:0;transform:scaleX(0.88);transform-origin:100% 0">12</span></div>
<div class="z" style="left:86px;top:157px"><span class="t" style="right:0;transform:scaleX(0.88);transform-origin:100% 0">-3</span></div>
<div class="z" style="left:113px;top:157px"><span class="t" style="right:0;transform:scaleX(0.88);transform-origin:100% 0">-3</span></div>
<div class="z" style="left:140px;top:157px"><span class="t" style="right:0;transform:scaleX(0.88);transform-origin:100% 0">-2</span></div>
<div class="z" style="left:196px;top:157px"><span class="t" style="right:0;transform:scaleX(0.88);transform-origin:100% 0">1.49423</span></div>
<div class="z" style="left:253px;top:157px"><span class="t" style="right:0;transform:scaleX(0.88);transform-origin:100% 0">177.000</span></div>
<div class="z" style="left:29px;top:170px"><span class="t" style="right:0;transform:scaleX(0.88);transform-origin:100% 0">0</span></div>
<div class="z" style="left:59px;top:170px"><span class="t" style="right:0;transform:scaleX(0.88);transform-origin:100% 0">13</span></div>
<div class="z" style="left:86px;top:170px"><span class="t" style="right:0;transform:scaleX(0.88);transform-origin:100% 0">-2</span></div>
<div class="z" style="left:113px;top:170px"><span class="t" style="right:0;transform:scaleX(0.88);transform-origin:100% 0">-2</span></div>
<div class="z" style="left:140px;top:170px"><span class="t" style="right:0;transform:scaleX(0.88);transform-origin:100% 0">-2</span></div>
<div class="z" style="left:196px;top:170px"><span class="t" style="right:0;transform:scaleX(0.88);transform-origin:100% 0">1.82669</span></div>
<div class="z" style="left:253px;top:170px"><span class="t" style="right:0;transform:scaleX(0.88);transform-origin:100% 0">173.000</span></div>
<div class="z" style="left:29px;top:183px"><span class="t" style="right:0;transform:scaleX(0.88);transform-origin:100% 0">0</span></div>
<div class="z" style="left:59px;top:183px"><span class="t" style="right:0;transform:scaleX(0.88);transform-origin:100% 0">14</span></div>
<div class="z" style="left:86px;top:183px"><span class="t" style="right:0;transform:scaleX(0.88);transform-origin:100% 0">2</span></div>
<div class="z" style="left:113px;top:183px"><span class="t" style="right:0;transform:scaleX(0.88);transform-origin:100% 0">2</span></div>
<div class="z" style="left:140px;top:183px"><span class="t" style="right:0;transform:scaleX(0.88);transform-origin:100% 0">-2</span></div>
<div class="z" style="left:196px;top:183px"><span class="t" style="right:0;transform:scaleX(0.88);transform-origin:100% 0">2.17979</span></div>
<div class="z" style="left:253px;top:183px"><span class="t" style="right:0;transform:scaleX(0.88);transform-origin:100% 0">184.000</span></div>
<div class="z" style="left:29px;top:196px"><span class="t" style="right:0;transform:scaleX(0.88);transform-origin:100% 0">0</span></div>
<div class="z" style="left:59px;top:196px"><span class="t" style="right:0;transform:scaleX(0.88);transform-origin:100% 0">15</span></div>
<div class="z" style="left:86px;top:196px"><span class="t" style="right:0;transform:scaleX(0.88);transform-origin:100% 0">3</span></div>
<div class="z" style="left:113px;top:196px"><span class="t" style="right:0;transform:scaleX(0.88);transform-origin:100% 0">3</span></div>
<div class="z" style="left:140px;top:196px"><span class="t" style="right:0;transform:scaleX(0.88);transform-origin:100% 0">-2</span></div>
<div class="z" style="left:196px;top:196px"><span class="t" style="right:0;transform:scaleX(0.88);transform-origin:100% 0">1.78757</span></div>
<div class="z" style="left:253px;top:196px"><span class="t" style="right:0;transform:scaleX(0.88);transform-origin:100% 0">178.000</span></div>
</div>
<div style="position:absolute;left:282px;top:518px;width:17px;height:205px;background:linear-gradient(90deg,#e3e3e3 0,#ececec 3px,#f2f2f2 8px,#f0f0f0 100%)"></div>
<svg style="position:absolute;left:282px;top:518px" width="17" height="205"><path d="M6 11 L9.5 7 L13 11 Z" fill="#3c3c3c"/><path d="M6 195 L9.5 199 L13 195 Z" fill="#3c3c3c"/></svg>
<div style="position:absolute;left:283px;top:536px;width:15px;height:20px;box-sizing:border-box;border:1px solid #9a9a9a;border-radius:2px;background:linear-gradient(90deg,#f6f6f6 0,#ececec 45%,#d8d8d8 55%,#cfcfcf 100%)"></div>
<svg style="position:absolute;left:282px;top:541px" width="17" height="9"><path d="M5 1.5 H12 M5 4.5 H12 M5 7.5 H12" stroke="#555" stroke-width="1"/></svg>
<div style="position:absolute;left:12px;top:723px;width:270px;height:17px;background:linear-gradient(180deg,#e3e3e3 0,#ececec 3px,#f2f2f2 8px,#f0f0f0 100%)"></div>
<svg style="position:absolute;left:12px;top:723px" width="270" height="17"><path d="M10 5 L6 8.5 L10 12 Z" fill="#3c3c3c"/><path d="M260 5 L264 8.5 L260 12 Z" fill="#3c3c3c"/></svg>
<div style="position:absolute;left:30px;top:724px;width:164px;height:15px;box-sizing:border-box;border:1px solid #9a9a9a;border-radius:2px;background:linear-gradient(180deg,#f6f6f6 0,#ececec 45%,#d8d8d8 55%,#cfcfcf 100%)"></div>
<svg style="position:absolute;left:107px;top:723px" width="9" height="17"><path d="M1.5 5 V12 M4.5 5 V12 M7.5 5 V12" stroke="#555" stroke-width="1"/></svg>
<div style="position:absolute;left:282px;top:723px;width:17px;height:17px;background:#f0f0f0"></div>
<div class="btn" style="left:310px;top:545px;width:63px;height:22px"></div>
<div class="z" style="left:341.2px;top:550px"><span class="t" style="left:0;transform:translateX(-50%) scaleX(0.88);transform-origin:50% 0;font-size:12px;color:#000;">Delete</span></div>
<div class="btn" style="left:310px;top:569px;width:63px;height:22px"></div>
<div class="z" style="left:341.2px;top:574px"><span class="t" style="left:0;transform:translateX(-50%) scaleX(0.88);transform-origin:50% 0;font-size:12px;color:#000;">Select</span></div>
<div class="btn" style="left:310px;top:593px;width:63px;height:22px"></div>
<div class="z" style="left:341.2px;top:598px"><span class="t" style="left:0;transform:translateX(-50%) scaleX(0.88);transform-origin:50% 0;font-size:12px;color:#000;">Unselect</span></div>
<div style="position:absolute;left:384px;top:519px;width:257px;height:223px;background:#fff;border:1px solid #646464;border-bottom:0;box-sizing:border-box"></div>
<div style="position:absolute;left:387px;top:527px;width:102px;height:1px;background:repeating-linear-gradient(90deg,#000 0 2px,transparent 2px 3px);box-shadow:0 1px 0 rgba(0,0,0,.15)"></div>
<div class="t" style="left:387px;top:534px;transform:scaleX(0.88);transform-origin:0 0;font-size:12px;color:#000;">UB matrix:</div>
<div class="z" style="left:449px;top:547px"><span class="t" style="right:0;transform:scaleX(0.88);transform-origin:100% 0;font-size:12px;color:#000;">-0.0837933</span></div>
<div class="z" style="left:519px;top:547px"><span class="t" style="right:0;transform:scaleX(0.88);transform-origin:100% 0;font-size:12px;color:#000;">0.0726523</span></div>
<div class="z" style="left:588px;top:547px"><span class="t" style="right:0;transform:scaleX(0.88);transform-origin:100% 0;font-size:12px;color:#000;">-0.0426836</span></div>
<div class="z" style="left:449px;top:560px"><span class="t" style="right:0;transform:scaleX(0.88);transform-origin:100% 0;font-size:12px;color:#000;">-0.0690573</span></div>
<div class="z" style="left:519px;top:560px"><span class="t" style="right:0;transform:scaleX(0.88);transform-origin:100% 0;font-size:12px;color:#000;">-0.0877413</span></div>
<div class="z" style="left:588px;top:560px"><span class="t" style="right:0;transform:scaleX(0.88);transform-origin:100% 0;font-size:12px;color:#000;">-0.0185725</span></div>
<div class="z" style="left:452px;top:573px"><span class="t" style="right:0;transform:scaleX(0.88);transform-origin:100% 0;font-size:12px;color:#000;">0.00372720</span></div>
<div class="z" style="left:524px;top:573px"><span class="t" style="right:0;transform:scaleX(0.88);transform-origin:100% 0;font-size:12px;color:#000;">0.00767469</span></div>
<div class="z" style="left:591px;top:573px"><span class="t" style="right:0;transform:scaleX(0.88);transform-origin:100% 0;font-size:12px;color:#000;">0.191733</span></div>
<div style="position:absolute;left:387px;top:592px;width:102px;height:1px;background:repeating-linear-gradient(90deg,#000 0 2px,transparent 2px 3px);box-shadow:0 1px 0 rgba(0,0,0,.15)"></div>
<div class="t" style="left:387px;top:599px;transform:scaleX(0.88);transform-origin:0 0;font-size:12px;color:#000;">Unit cell parameters:</div>
<div class="z" style="left:444px;top:612px"><span class="t" style="right:0;transform:scaleX(0.88);transform-origin:100% 0;font-size:12px;color:#000;">9.53200</span></div>
<div class="z" style="left:507px;top:612px"><span class="t" style="right:0;transform:scaleX(0.88);transform-origin:100% 0;font-size:12px;color:#000;">8.75853</span></div>
<div class="z" style="left:570px;top:612px"><span class="t" style="right:0;transform:scaleX(0.88);transform-origin:100% 0;font-size:12px;color:#000;">5.24888</span></div>
<div class="z" style="left:444px;top:625px"><span class="t" style="right:0;transform:scaleX(0.88);transform-origin:100% 0;font-size:12px;color:#000;">90.0000</span></div>
<div class="z" style="left:507px;top:625px"><span class="t" style="right:0;transform:scaleX(0.88);transform-origin:100% 0;font-size:12px;color:#000;">105.071</span></div>
<div class="z" style="left:570px;top:625px"><span class="t" style="right:0;transform:scaleX(0.88);transform-origin:100% 0;font-size:12px;color:#000;">90.0000</span></div>
<div style="position:absolute;left:387px;top:644px;width:102px;height:1px;background:repeating-linear-gradient(90deg,#000 0 2px,transparent 2px 3px);box-shadow:0 1px 0 rgba(0,0,0,.15)"></div>
<div class="t" style="left:387px;top:651px;transform:scaleX(0.88);transform-origin:0 0;font-size:12px;color:#000;">Estimated standatd deviations:</div>
<div class="z" style="left:449px;top:664px"><span class="t" style="right:0;transform:scaleX(0.88);transform-origin:100% 0;font-size:12px;color:#000;">0.0101181</span></div>
<div class="z" style="left:521px;top:664px"><span class="t" style="right:0;transform:scaleX(0.88);transform-origin:100% 0;font-size:12px;color:#000;">0.00806338</span></div>
<div class="z" style="left:593px;top:664px"><span class="t" style="right:0;transform:scaleX(0.88);transform-origin:100% 0;font-size:12px;color:#000;">0.00240490</span></div>
<div class="z" style="left:447px;top:677px"><span class="t" style="right:0;transform:scaleX(0.88);transform-origin:100% 0;font-size:12px;color:#000;">0.000000</span></div>
<div class="z" style="left:516px;top:677px"><span class="t" style="right:0;transform:scaleX(0.88);transform-origin:100% 0;font-size:12px;color:#000;">0.0519563</span></div>
<div class="z" style="left:581px;top:677px"><span class="t" style="right:0;transform:scaleX(0.88);transform-origin:100% 0;font-size:12px;color:#000;">0.000000</span></div>
<div style="position:absolute;left:387px;top:696px;width:102px;height:1px;background:repeating-linear-gradient(90deg,#000 0 2px,transparent 2px 3px);box-shadow:0 1px 0 rgba(0,0,0,.15)"></div>
<div class="t" style="left:387px;top:703px;transform:scaleX(0.88);transform-origin:0 0;font-size:12px;color:#000;">Chi^2=</div>
<div class="t" style="left:432px;top:703px;transform:scaleX(0.88);transform-origin:0 0;font-size:12px;color:#000;">0.0283864</div>
<div style="position:absolute;left:387px;top:722px;width:102px;height:1px;background:repeating-linear-gradient(90deg,#000 0 2px,transparent 2px 3px);box-shadow:0 1px 0 rgba(0,0,0,.15)"></div>
<div style="position:absolute;left:623px;top:520px;width:17px;height:205px;background:linear-gradient(90deg,#e3e3e3 0,#ececec 3px,#f2f2f2 8px,#f0f0f0 100%)"></div>
<svg style="position:absolute;left:623px;top:520px" width="17" height="205"><path d="M6 11 L9.5 7 L13 11 Z" fill="#3c3c3c"/><path d="M6 195 L9.5 199 L13 195 Z" fill="#3c3c3c"/></svg>
<div style="position:absolute;left:624px;top:538px;width:15px;height:115px;box-sizing:border-box;border:1px solid #9a9a9a;border-radius:2px;background:linear-gradient(90deg,#f6f6f6 0,#ececec 45%,#d8d8d8 55%,#cfcfcf 100%)"></div>
<svg style="position:absolute;left:623px;top:591px" width="17" height="9"><path d="M5 1.5 H12 M5 4.5 H12 M5 7.5 H12" stroke="#555" stroke-width="1"/></svg>
<div style="position:absolute;left:385px;top:725px;width:238px;height:17px;background:linear-gradient(180deg,#e3e3e3 0,#ececec 3px,#f2f2f2 8px,#f0f0f0 100%)"></div>
<svg style="position:absolute;left:385px;top:725px" width="238" height="17"><path d="M10 5 L6 8.5 L10 12 Z" fill="#3c3c3c"/><path d="M228 5 L232 8.5 L228 12 Z" fill="#3c3c3c"/></svg>
<div style="position:absolute;left:403px;top:726px;width:162px;height:15px;box-sizing:border-box;border:1px solid #9a9a9a;border-radius:2px;background:linear-gradient(180deg,#f6f6f6 0,#ececec 45%,#d8d8d8 55%,#cfcfcf 100%)"></div>
<svg style="position:absolute;left:479px;top:725px" width="9" height="17"><path d="M1.5 5 V12 M4.5 5 V12 M7.5 5 V12" stroke="#555" stroke-width="1"/></svg>
<div style="position:absolute;left:623px;top:725px;width:17px;height:17px;background:#f0f0f0"></div>
<div style="position:absolute;left:649px;top:520px;width:239px;height:221px;background:#fff;border:1px solid #646464;border-right:0;box-sizing:border-box"></div>
<div class="t" style="left:29px;top:9px;transform:scaleX(0.985);transform-origin:0 0;font-size:12px;color:#000;-webkit-text-stroke:0.22px #000">RSV: E:\Dropbox (UH Mineral Physics)\PX^2\Data\Omphacite\PX2_rawdata_Mar24\P1\Jove_merged.pks</div>
<svg style="position:absolute;left:8px;top:8px" width="18" height="16"><rect x="3" y="1" width="14" height="14" fill="#c8b48a" opacity=".7"/><rect x="2.5" y="0.5" width="13" height="13" fill="#fffdf5" stroke="#13309a"/><path d="M3 1.5 H15" stroke="#fff" stroke-width="1"/><g fill="#1d3fc0"><circle cx="1.5" cy="7" r="1.35"/><circle cx="1.5" cy="10" r="1.35"/><circle cx="4.5" cy="7" r="1.4"/><circle cx="4.5" cy="10" r="1.4"/><circle cx="4.5" cy="4.5" r="1.35"/><circle cx="7.5" cy="4.5" r="1.4"/><circle cx="7.5" cy="10" r="1.4"/></g><g fill="#f0c000"><circle cx="4.5" cy="4.5" r="1.4"/><circle cx="7.5" cy="7" r="1.5"/></g><g fill="#e08a00"><circle cx="10.5" cy="4.5" r="1.2"/><circle cx="10.5" cy="7" r="1.2"/><circle cx="10.5" cy="10" r="1.2"/></g></svg>
<div style="position:absolute;left:786px;top:0;width:103px;height:20px;box-sizing:border-box;border:1px solid #3a4f78;border-top:0;border-radius:0 0 5px 5px;overflow:hidden;box-shadow:0 1px 0 rgba(255,255,255,.5)"><div style="position:absolute;left:0;top:0;width:27px;height:19px;background:linear-gradient(180deg,#c3d0e6 0,#aebfdc 45%,#6a86bb 50%,#7d97c8 100%);box-shadow:inset 1px 1px 0 rgba(255,255,255,.5)"></div><div style="position:absolute;left:27px;top:0;width:1px;height:19px;background:#3a4f78"></div><div style="position:absolute;left:28px;top:0;width:26px;height:19px;background:linear-gradient(180deg,#c3d0e6 0,#aebfdc 45%,#6a86bb 50%,#7d97c8 100%);box-shadow:inset 1px 1px 0 rgba(255,255,255,.5)"></div><div style="position:absolute;left:54px;top:0;width:1px;height:19px;background:#3a4f78"></div><div style="position:absolute;left:55px;top:0;width:47px;height:19px;background:linear-gradient(180deg,#dba197 0,#cf7b6c 45%,#c0392b 50%,#d0584a 100%);box-shadow:inset 1px 1px 0 rgba(255,255,255,.45)"></div></div>
<svg style="position:absolute;left:786px;top:0" width="103" height="20"><rect x="9.5" y="10.5" width="11" height="4" fill="#fff" stroke="#333" stroke-width="1"/><rect x="36.5" y="5.5" width="11" height="9" fill="none" stroke="#333" stroke-width="1"/><rect x="37.5" y="6.5" width="9" height="7" fill="none" stroke="#fff" stroke-width="2"/><rect x="39.5" y="8.5" width="5" height="3" fill="none" stroke="#333" stroke-width="1"/><path d="M76.5 7.5 L82.5 12 M82.5 7.5 L76.5 12" stroke="#333" stroke-width="3.8" stroke-linecap="square"/><path d="M76.5 7.5 L82.5 12 M82.5 7.5 L76.5 12" stroke="#fff" stroke-width="2" stroke-linecap="square"/></svg>
</body></html>
